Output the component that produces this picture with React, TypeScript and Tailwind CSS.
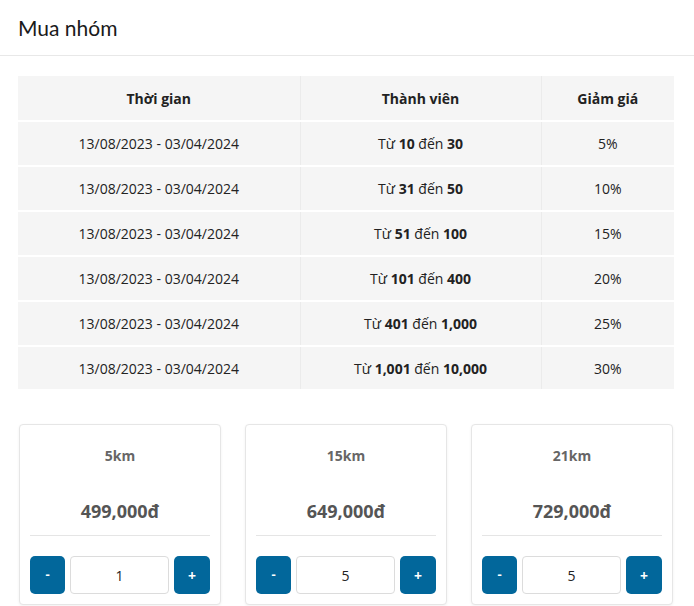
import { useState } from 'react'

interface Tier {
  from: string
  to: string
  discount: string
}

const tiers: Tier[] = [
  { from: '10', to: '30', discount: '5%' },
  { from: '31', to: '50', discount: '10%' },
  { from: '51', to: '100', discount: '15%' },
  { from: '101', to: '400', discount: '20%' },
  { from: '401', to: '1,000', discount: '25%' },
  { from: '1,001', to: '10,000', discount: '30%' },
]

const tickets = [
  { name: '5km', price: '499,000đ', qty: 1 },
  { name: '15km', price: '649,000đ', qty: 5 },
  { name: '21km', price: '729,000đ', qty: 5 },
]

function TicketCard({ name, price, qty }: { name: string; price: string; qty: number }) {
  const [count, setCount] = useState(qty)
  return (
    <div className="min-w-0 rounded-[4px] border border-[#e6e6e6] bg-white px-[10px] pb-[10px] pt-[20px] shadow-[0_1px_3px_rgba(0,0,0,0.06)]">
      <div className="text-center text-[14px] font-bold leading-[22px] text-[#666]">{name}</div>
      <div className="mt-[31px] text-center text-[18px] font-bold leading-[26px] text-[#555]">{price}</div>
      <div className="mt-[11px] border-t border-[#e5e5e5]" />
      <div className="mt-[20px] flex gap-[5px]">
        <button
          onClick={() => setCount((c) => Math.max(0, c - 1))}
          className="h-[38px] w-[35px] shrink-0 rounded-[5px] bg-[#02679b] text-[13px] font-bold text-white"
        >
          -
        </button>
        <input
          value={count}
          onChange={(e) => setCount(Number(e.target.value) || 0)}
          className="h-[38px] w-0 min-w-0 flex-1 rounded-[4px] border border-[#dcdcdc] text-center text-[14px] text-[#222] outline-none"
        />
        <button
          onClick={() => setCount((c) => c + 1)}
          className="h-[38px] w-[36px] shrink-0 rounded-[5px] bg-[#02679b] text-[14px] font-bold text-white"
        >
          +
        </button>
      </div>
    </div>
  )
}

export default function App() {
  return (
    <div className="min-h-[606px] w-[694px] bg-white font-['Open_Sans',sans-serif] text-[#222]">
      <div className="flex h-[56px] items-center border-b border-[#e8e8e8] px-[18px]">
        <h1 className="font-['Lato',sans-serif] text-[21px] text-[#1a1a1a]">Mua nhóm</h1>
      </div>

      <div className="pl-[18px] pr-[20px] pt-[20px]">
        <table className="w-full border-collapse text-[14px]">
          <thead>
            <tr className="h-[45px] border-b-2 border-white bg-[#f5f5f5]">
              <th className="w-[282px] border-r border-[#ebebeb] font-bold">Thời gian</th>
              <th className="w-[241px] border-r border-[#ebebeb] font-bold">Thành viên</th>
              <th className="font-bold">Giảm giá</th>
            </tr>
          </thead>
          <tbody>
            {tiers.map((t) => (
              <tr key={t.from} className="h-[45px] border-b-2 border-white bg-[#f5f5f5] last:h-[43px] last:border-b-0">
                <td className="border-r border-[#ebebeb] text-center">13/08/2023 - 03/04/2024</td>
                <td className="border-r border-[#ebebeb] text-center">
                  Từ <b>{t.from}</b> đến <b>{t.to}</b>
                </td>
                <td className="text-center">{t.discount}</td>
              </tr>
            ))}
          </tbody>
        </table>

        <div className="mt-[35px] grid grid-cols-3 gap-[24px] pl-[1px] pr-[1px]">
          {tickets.map((t) => (
            <TicketCard key={t.name} {...t} />
          ))}
        </div>
      </div>
    </div>
  )
}
